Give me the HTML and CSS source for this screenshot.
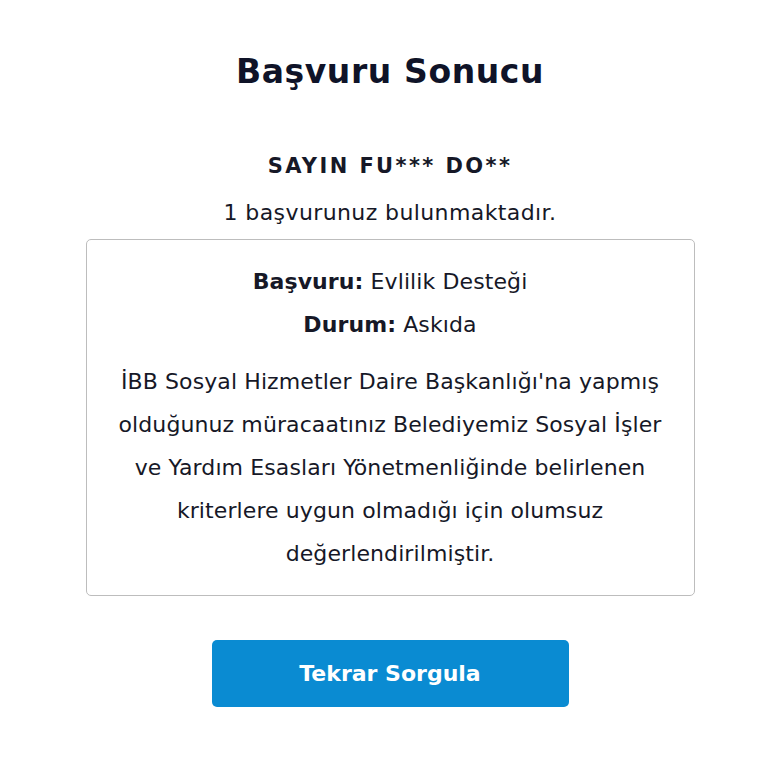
FILE: index.html
```html
<!DOCTYPE html>
<html lang="tr">
<head>
  <meta charset="UTF-8">
  <title>Başvuru Sonucu</title>
  <link rel="stylesheet" href="styles.css">
</head>
<body>
  <div class="page">
    <h1>Başvuru Sonucu</h1>

    <p class="name">SAYIN FU*** DO**</p>
    <p class="count">1 başvurunuz bulunmaktadır.</p>

    <div class="result">
      <p><strong>Başvuru:</strong> Evlilik Desteği</p>
      <p><strong>Durum:</strong> Askıda</p>
      <p class="desc">İBB Sosyal Hizmetler Daire Başkanlığı'na yapmış olduğunuz müracaatınız Belediyemiz Sosyal İşler ve Yardım Esasları Yönetmenliğinde belirlenen kriterlere uygun olmadığı için olumsuz değerlendirilmiştir.</p>
    </div>

    <button class="again">Tekrar Sorgula</button>
  </div>
</body>
</html>
```

FILE: styles.css
```css
body { margin: 0; padding-left: 12px; background: #fff; color: #161827; font-family: "DejaVu Sans", "Liberation Sans", sans-serif; }
.page { width: 609px; margin: 0 auto; padding-top: 51px; text-align: center; display: flex; flex-direction: column; align-items: center; }
h1 { font-size: 33px; line-height: 42px; font-weight: 700; letter-spacing: 0.6px; margin: 0 0 58px; color: #0f1328; }
p { margin: 0; }
.name { font-size: 21px; line-height: 30px; font-weight: 700; letter-spacing: 2.4px; }
.count { font-size: 22px; line-height: 30px; letter-spacing: 0.4px; margin-top: 17px; margin-bottom: 11px; }
.result { box-sizing: border-box; width: 609px; border: 1px solid #bdbdbd; border-radius: 5px; padding: 20px 20px 20px; }
.result p { font-size: 22px; line-height: 43px; letter-spacing: 0.1px; }
.result strong { font-weight: 700; }
.result .desc { margin-top: 14px; }
.again { margin-top: 44px; width: 357px; height: 67px; border: 0; border-radius: 5px; background: #0a8bd2; color: #fff; font: 700 22px "DejaVu Sans", "Liberation Sans", sans-serif; cursor: pointer; }
```
